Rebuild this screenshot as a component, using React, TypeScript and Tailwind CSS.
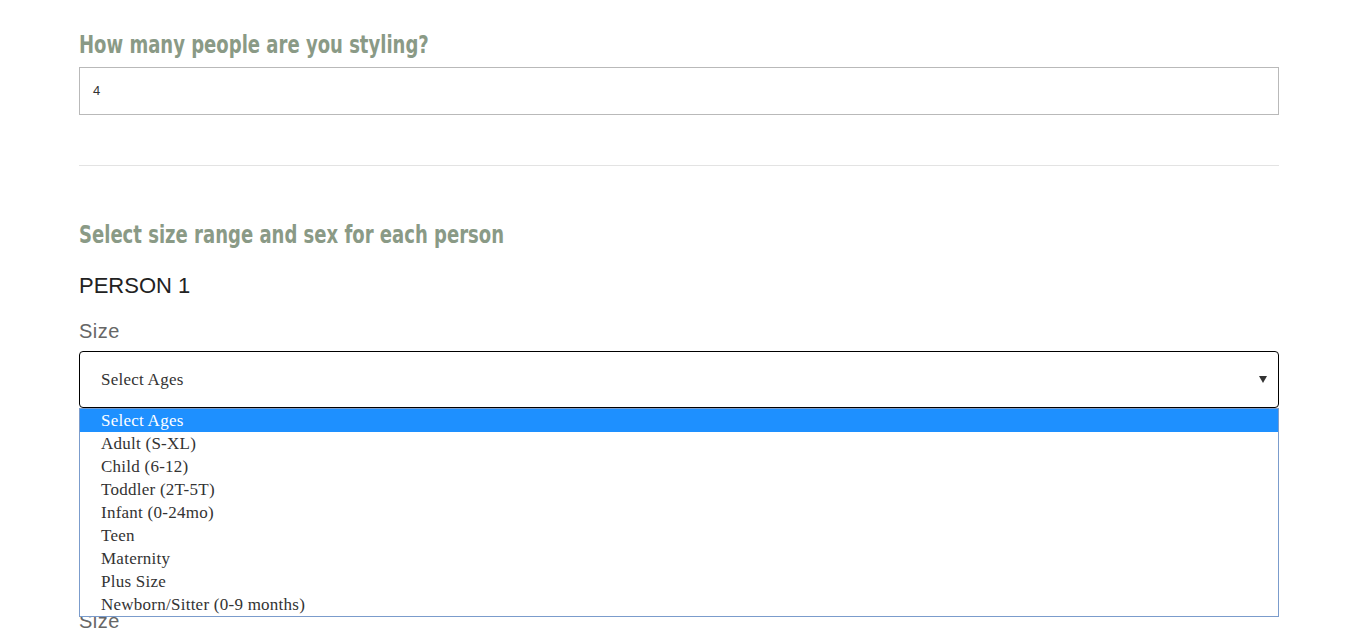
const headingFont = {
  fontFamily: "'DejaVu Sans Condensed', 'DejaVu Sans', sans-serif",
  fontStretch: 'condensed',
};

const options = [
  'Select Ages',
  'Adult (S-XL)',
  'Child (6-12)',
  'Toddler (2T-5T)',
  'Infant (0-24mo)',
  'Teen',
  'Maternity',
  'Plus Size',
  'Newborn/Sitter (0-9 months)',
];

function SelectBox({ label, open }: { label: string; open?: boolean }) {
  return (
    <div className="relative">
      <div className="flex h-[57px] items-center justify-between rounded-[4px] border border-black bg-white pl-[21px] pr-[10px] font-['Liberation_Serif',serif] text-[17px] tracking-[0.25px] text-[#333]">
        <span>{label}</span>
        <svg width="8" height="7" viewBox="0 0 8 7" className="mr-[1px]">
          <path d="M0 0 H8 L4 7 Z" fill="#333" />
        </svg>
      </div>
      {open && (
        <ul className="absolute left-0 right-0 top-full z-10 border border-[#7b9ccc] bg-white font-['Liberation_Serif',serif] text-[17px] tracking-[0.25px] text-[#333]">
          {options.map((o, i) => (
            <li
              key={o}
              className={`flex h-[23px] items-center pl-[21px] ${i === 0 ? 'bg-[#1e90ff] text-white' : ''}`}
            >
              {o}
            </li>
          ))}
        </ul>
      )}
    </div>
  );
}

export default function App() {
  return (
    <div className="h-[635px] overflow-hidden bg-white font-['Liberation_Sans',Arial,sans-serif]">
      <div className="ml-[79px] w-[1200px] pt-[29px]">
        <h1
          style={headingFont}
          className="origin-left scale-x-[0.835] whitespace-nowrap text-[24px] font-bold leading-[32px] text-[#8a9a86]"
        >
          How many people are you styling?
        </h1>
        <div className="mt-[6px] flex h-[48px] items-center border border-[#b9b9b9] pl-[13px] text-[13px] text-[#333]">
          4
        </div>

        <hr className="mt-[50px] border-t border-[#e3e3e3]" />

        <h2
          style={headingFont}
          className="mt-[53px] origin-left scale-x-[0.835] whitespace-nowrap text-[24px] font-bold leading-[32px] text-[#8a9a86]"
        >
          Select size range and sex for each person
        </h2>

        <div className="mt-[21px] text-[22px] leading-[28px] text-[#222]">PERSON 1</div>
        <div className="mt-[19px] text-[20px] leading-[24px] tracking-[0.5px] text-[#666]">Size</div>
        <div className="mt-[8px]">
          <SelectBox label="Select Ages" open />
        </div>

        <div className="mt-[201px] text-[20px] leading-[24px] tracking-[0.5px] text-[#666]">Size</div>
      </div>
    </div>
  );
}
